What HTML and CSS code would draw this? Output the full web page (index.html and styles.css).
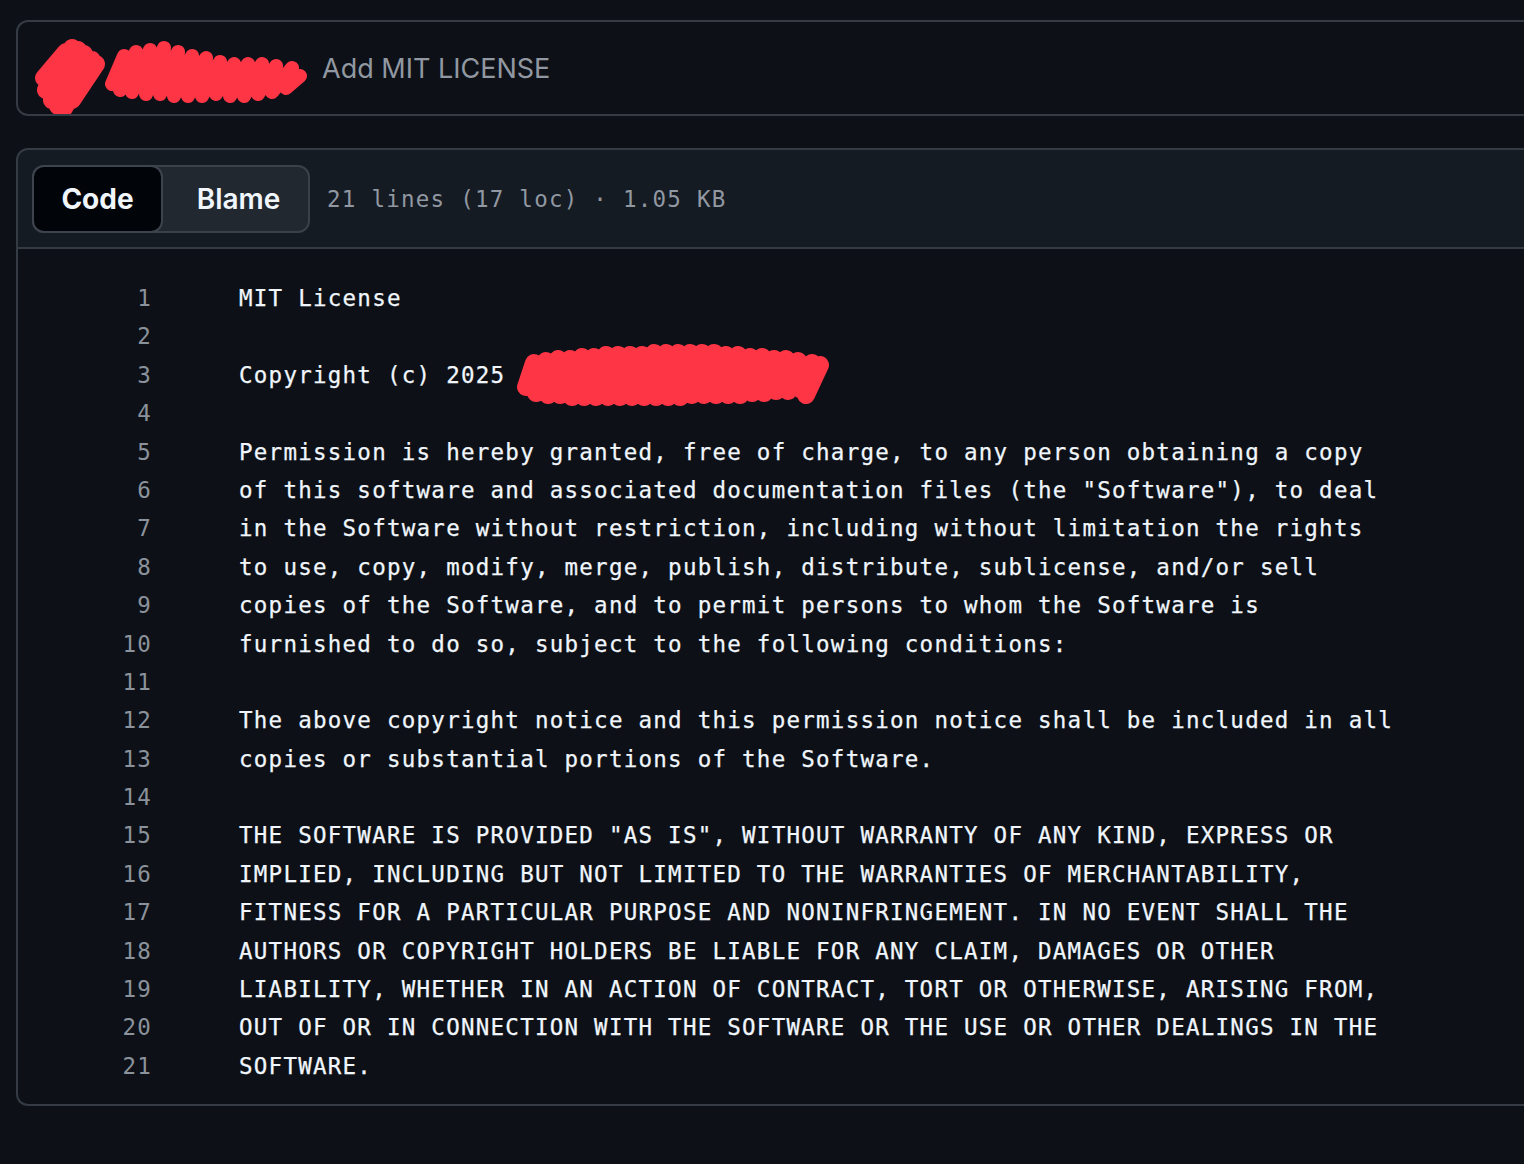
FILE: index.html
```html
<!DOCTYPE html>
<html lang="en">
<head>
<meta charset="utf-8">
<title>LICENSE</title>
<link rel="stylesheet" href="styles.css">
</head>
<body>
<div class="page">
  <div class="commit-box">
    <svg class="redact redact-author" width="278" height="80" viewBox="0 0 278 80" aria-hidden="true">
      <path class="scribble" d="M12,44 L34,18 L14,56 L40,14 L20,66 L46,16 L26,72 L52,20 L32,74 L60,26 L40,66 L64,30"/>
      <path class="scribble thin" d="M80,50 L92,22 L88,56 L104,18 L100,58 L118,16 L114,60 L132,14 L128,60 L146,18 L142,62 L160,22 L156,62 L174,24 L170,62 L188,28 L184,60 L202,30 L198,62 L216,30 L212,62 L230,30 L226,60 L244,32 L240,58 L260,34 L254,54 L268,42"/>
    </svg>
    <span class="commit-msg">Add MIT LICENSE</span>
  </div>

  <div class="file">
    <div class="file-header">
      <div class="seg">
        <button class="seg-btn seg-active">Code</button>
        <button class="seg-btn">Blame</button>
      </div>
      <span class="meta">21 lines (17 loc) · 1.05 KB</span>
    </div>
    <div class="code">
      <div class="line"><span class="num">1</span><span class="txt">MIT License</span></div>
      <div class="line"><span class="num">2</span><span class="txt"></span></div>
      <div class="line"><span class="num">3</span><span class="txt">Copyright (c) 2025 <svg class="redact redact-name" width="316" height="64" viewBox="0 0 316 64" aria-hidden="true"><path class="scribble" d="M10,44 L18,20 L20,50 L30,18 L32,52 L42,16 L44,52 L54,16 L56,54 L66,14 L68,54 L78,14 L80,54 L90,12 L92,54 L102,12 L104,54 L114,12 L116,54 L126,12 L128,54 L138,10 L140,54 L150,10 L152,54 L162,10 L164,54 L174,10 L176,52 L186,10 L188,52 L198,10 L200,52 L210,12 L212,52 L222,12 L224,52 L234,14 L236,50 L246,14 L248,50 L258,16 L260,48 L270,16 L272,48 L282,18 L284,46 L296,20 L290,48 L304,22 L290,52"/></svg></span></div>
      <div class="line"><span class="num">4</span><span class="txt"></span></div>
      <div class="line"><span class="num">5</span><span class="txt">Permission is hereby granted, free of charge, to any person obtaining a copy</span></div>
      <div class="line"><span class="num">6</span><span class="txt">of this software and associated documentation files (the "Software"), to deal</span></div>
      <div class="line"><span class="num">7</span><span class="txt">in the Software without restriction, including without limitation the rights</span></div>
      <div class="line"><span class="num">8</span><span class="txt">to use, copy, modify, merge, publish, distribute, sublicense, and/or sell</span></div>
      <div class="line"><span class="num">9</span><span class="txt">copies of the Software, and to permit persons to whom the Software is</span></div>
      <div class="line"><span class="num">10</span><span class="txt">furnished to do so, subject to the following conditions:</span></div>
      <div class="line"><span class="num">11</span><span class="txt"></span></div>
      <div class="line"><span class="num">12</span><span class="txt">The above copyright notice and this permission notice shall be included in all</span></div>
      <div class="line"><span class="num">13</span><span class="txt">copies or substantial portions of the Software.</span></div>
      <div class="line"><span class="num">14</span><span class="txt"></span></div>
      <div class="line"><span class="num">15</span><span class="txt">THE SOFTWARE IS PROVIDED "AS IS", WITHOUT WARRANTY OF ANY KIND, EXPRESS OR</span></div>
      <div class="line"><span class="num">16</span><span class="txt">IMPLIED, INCLUDING BUT NOT LIMITED TO THE WARRANTIES OF MERCHANTABILITY,</span></div>
      <div class="line"><span class="num">17</span><span class="txt">FITNESS FOR A PARTICULAR PURPOSE AND NONINFRINGEMENT. IN NO EVENT SHALL THE</span></div>
      <div class="line"><span class="num">18</span><span class="txt">AUTHORS OR COPYRIGHT HOLDERS BE LIABLE FOR ANY CLAIM, DAMAGES OR OTHER</span></div>
      <div class="line"><span class="num">19</span><span class="txt">LIABILITY, WHETHER IN AN ACTION OF CONTRACT, TORT OR OTHERWISE, ARISING FROM,</span></div>
      <div class="line"><span class="num">20</span><span class="txt">OUT OF OR IN CONNECTION WITH THE SOFTWARE OR THE USE OR OTHER DEALINGS IN THE</span></div>
      <div class="line"><span class="num">21</span><span class="txt">SOFTWARE.</span></div>
    </div>
  </div>
</div>
</body>
</html>
```

FILE: styles.css
```css
html, body {
  margin: 0;
  padding: 0;
  background: #0d1117;
  overflow: hidden;
}

body {
  font-family: Inter, "Noto Sans", "Liberation Sans", sans-serif;
  color: #f0f6fc;
}

.page {
  padding: 20px 0 0 16px;
  margin-right: -40px;
}

/* commit bar */
.commit-box {
  height: 92px;
  border: 2px solid #353b44;
  border-radius: 12px;
  display: flex;
  align-items: center;
  padding-left: 14px;
}

.redact {
  display: block;
  flex: none;
}

.scribble {
  fill: none;
  stroke: #fd3545;
  stroke-width: 18;
  stroke-linecap: round;
  stroke-linejoin: round;
}

.scribble.thin {
  stroke-width: 14;
}

.redact-author {
  margin-top: 12px;
}

.commit-msg {
  margin-left: 12px;
  font-size: 27px;
  color: #9198a1;
}

/* file box */
.file {
  margin-top: 32px;
}

.file-header {
  background: #151b23;
  border: 2px solid #353b44;
  border-top-left-radius: 12px;
  padding: 15px 0 14px 14px;
  display: flex;
  align-items: center;
}

.seg {
  display: flex;
  height: 64px;
  width: 274px;
  background: #212830;
  border: 2px solid #3a414a;
  border-radius: 12px;
}

.seg-btn {
  font-family: Inter, "Noto Sans", "Liberation Sans", sans-serif;
  font-size: 28px;
  font-weight: 600;
  color: #f0f6fc;
  background: transparent;
  border: none;
  padding: 0 0 0 6px;
  flex: 1;
  cursor: pointer;
}

.seg-active {
  flex: none;
  width: 131px;
  margin: -2px 0 -2px -2px;
  padding: 0;
  background: #010409;
  border: 2px solid #3d444d;
  border-radius: 12px;
  font-weight: 700;
}

.meta {
  margin-left: 17px;
  font-family: "DejaVu Sans Mono", "Liberation Mono", monospace;
  font-size: 22.5px;
  letter-spacing: 1.25px;
  color: #9198a1;
}

/* code */
.code {
  border-left: 2px solid #353b44;
  border-bottom: 2px solid #353b44;
  border-bottom-left-radius: 12px;
  padding: 30px 0 19px 0;
  font-family: "DejaVu Sans Mono", "Liberation Mono", monospace;
  font-size: 22.5px;
  letter-spacing: 1.25px;
}

.line {
  display: flex;
  height: 38.4px;
  line-height: 38.4px;
  align-items: center;
}

.num {
  flex: none;
  width: 134px;
  text-align: right;
  color: #8b929b;
}

.txt {
  margin-left: 87px;
  white-space: pre;
  color: #f0f6fc;
  display: flex;
  align-items: center;
  -webkit-text-stroke: 0.25px #f0f6fc;
}

.redact-name {
  margin-left: -4px;
}
```
